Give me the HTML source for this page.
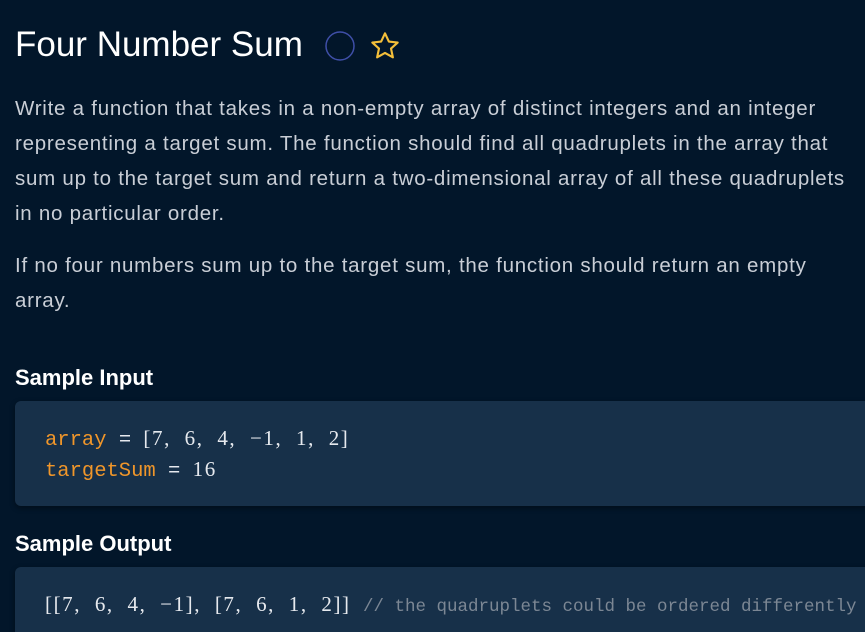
<!DOCTYPE html>
<html><head><meta charset="utf-8"><style>
html,body{margin:0;padding:0;background:#02162a;width:865px;height:632px;overflow:hidden}
body{font-family:"Liberation Sans",sans-serif;color:#c9ced6;position:relative}
.t{position:absolute;left:15px;top:25px;font-size:35px;color:#fff;white-space:nowrap}
.p{position:absolute;left:15px;font-size:20.5px;line-height:35px;white-space:nowrap;letter-spacing:0.75px}
.h{position:absolute;left:15px;font-size:22px;font-weight:bold;color:#fff;white-space:nowrap}
.box{position:absolute;left:15px;width:880px;background:#173049;border-radius:6px;box-shadow:0 2px 6px rgba(0,0,0,.4)}
.code{position:absolute;left:45px;font-family:"Liberation Mono",monospace;font-size:20.5px;line-height:29px;white-space:pre;color:#e6e9ee}
.o{color:#f0962a}
.c{color:#7c8794;font-size:17.5px}
.n{font-family:"Liberation Serif",serif;font-size:21px;letter-spacing:1.6px}
</style></head><body>
<div class="t">Four Number Sum</div>
<svg style="position:absolute;left:325px;top:31px" width="30" height="30"><circle cx="15" cy="15" r="14" fill="none" stroke="#3f4fa8" stroke-width="1.5"/></svg>
<svg style="position:absolute;left:369px;top:30px" width="32" height="32" viewBox="0 0 24 24"><path d="M12 2.5l2.9 6.2 6.6.7-5 4.5 1.4 6.6L12 17.2l-5.9 3.3 1.4-6.6-5-4.5 6.6-.7z" fill="none" stroke="#f4bf3a" stroke-width="1.6" stroke-linejoin="round"/></svg>
<div class="p" style="top:91px">Write a function that takes in a non-empty array of distinct integers and an integer<br>representing a target sum. The function should find all quadruplets in the array that<br>sum up to the target sum and return a two-dimensional array of all these quadruplets<br>in no particular order.</div>
<div class="p" style="top:248px">If no four numbers sum up to the target sum, the function should return an empty<br>array.</div>
<div class="h" style="top:365px">Sample Input</div>
<div class="box" style="top:401px;height:105px"></div>
<div class="code" style="top:424px"><span class="o">array</span> = <span class="n">[7,  6,  4,  −1,  1,  2]</span>
<span class="o">targetSum</span> = <span class="n">16</span></div>
<div class="h" style="top:531px">Sample Output</div>
<div class="box" style="top:567px;height:65px;border-radius:6px 0 0 0"></div>
<div class="code" style="top:590px"><span class="n">[[7,  6,  4,  −1],  [7,  6,  1,  2]]</span> <span class="c">// the quadruplets could be ordered differently</span></div>
</body></html>
